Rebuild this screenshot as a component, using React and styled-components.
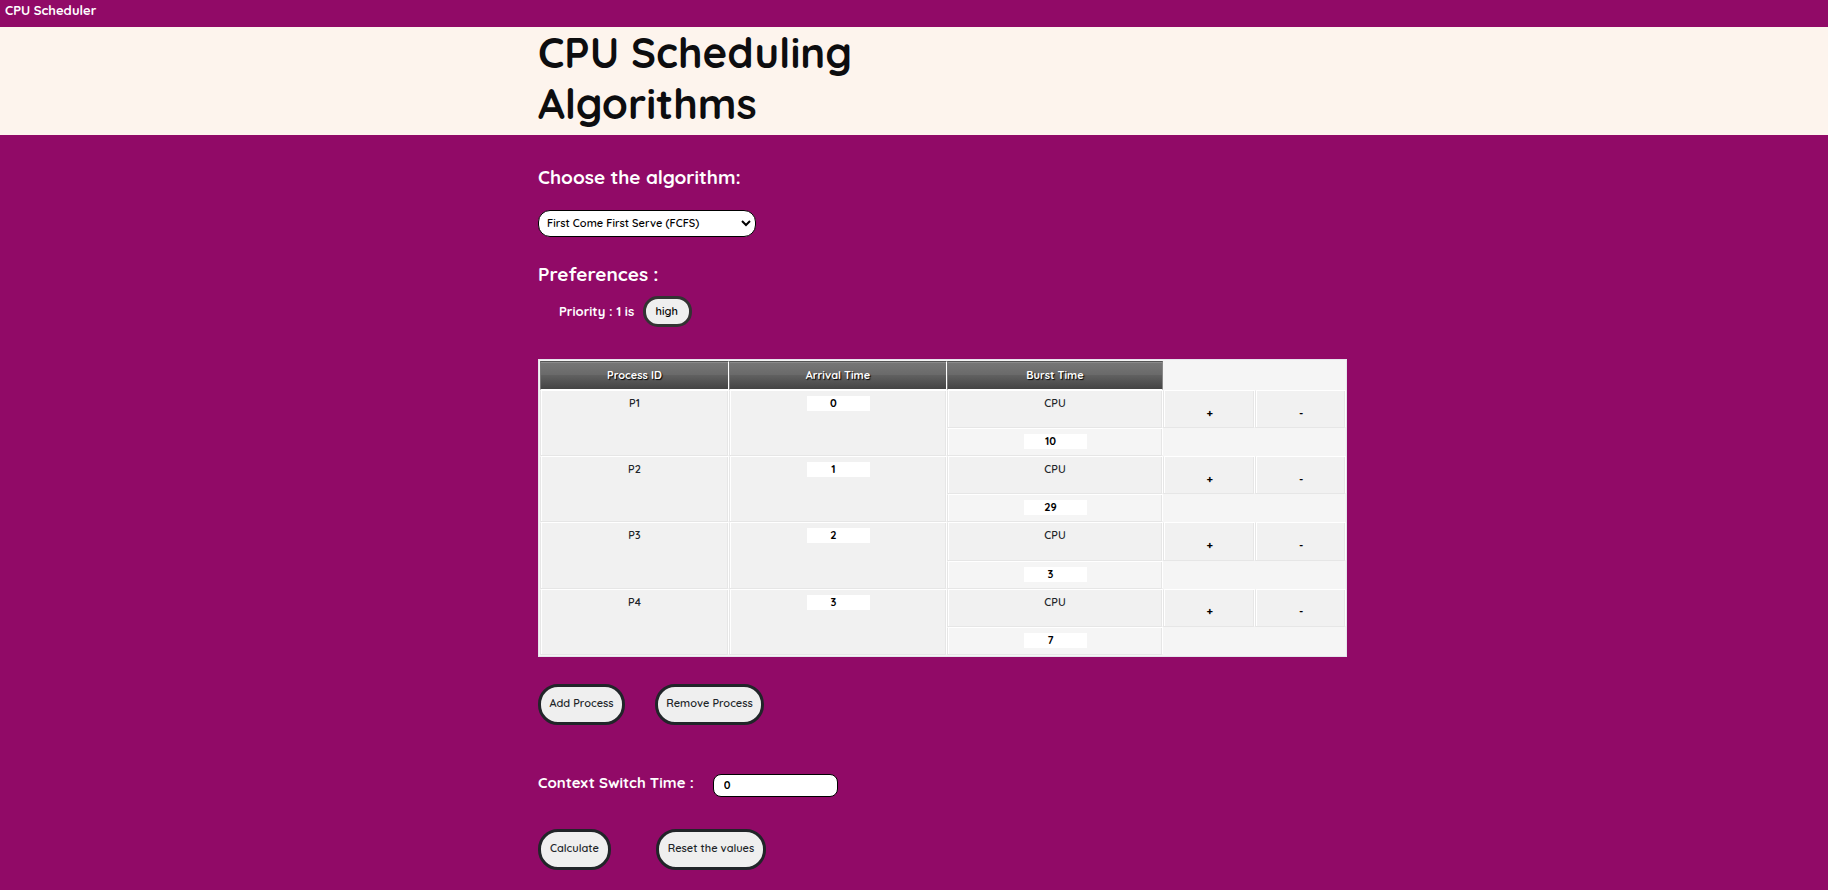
import React, { useState } from "react";
import styled, { createGlobalStyle, css } from "styled-components";

const GlobalStyle = createGlobalStyle`
  *, *::before, *::after { box-sizing: border-box; }
  body {
    margin: 0;
    min-height: 100vh;
    background: #910a67;
    color: #fff;
    font-family: Quicksand, Lato, "Liberation Sans", sans-serif;
    font-size: 11px;
    font-weight: 700;
  }
  button, input, select { font: inherit; }
`;

const NavBar = styled.nav`
  display: flex;
  height: 27px;
  padding: 1px 5px;
`;

const Brand = styled.a`
  color: #fff;
  font-size: 13px;
  line-height: 19px;
  text-decoration: none;
`;

const gutter = css`
  padding-left: calc(50% - 376px);
`;

const Header = styled.header`
  ${gutter}
  padding-bottom: 6px;
  background: #fdf4ed;
`;

const Title = styled.h1`
  max-width: 420px;
  margin: 0;
  color: #0d0d0f;
  font-size: 42px;
  font-weight: 700;
  line-height: 51px;
`;

const Main = styled.main`
  ${gutter}
  padding-top: 30px;
  display: flex;
  flex-direction: column;
  align-items: flex-start;
`;

const Heading = styled.label`
  font-size: 19px;
  line-height: 25px;
`;

const SectionTitle = styled.h2`
  margin: 25px 0 9px;
  font-size: 19px;
  font-weight: 700;
  line-height: 25px;
`;

const SelectWrap = styled.div`
  position: relative;
  margin-top: 20px;
  svg {
    position: absolute;
    right: 5px;
    top: 10px;
    pointer-events: none;
  }
`;

const Select = styled.select`
  appearance: none;
  display: block;
  width: 218px;
  height: 27px;
  padding: 0 24px 1px 8px;
  border: 1px solid #000;
  border-radius: 12px;
  background: #fff;
  color: #000;
  font-weight: 600;
`;

const Priority = styled.div`
  display: flex;
  align-items: center;
  gap: 9px;
  margin-left: 21px;
  font-size: 13px;
`;

const PriorityText = styled.span`
  padding-bottom: 2px;
`;

const PillButton = styled.button`
  height: ${(p) => (p.$small ? 31 : 41)}px;
  width: ${(p) => p.$width}px;
  padding: 0 ${(p) => (p.$small ? "2px 1px 0" : "0 3px")};
  border: 3px solid ${(p) => (p.$small ? "#333" : "#212529")};
  border-radius: ${(p) => (p.$small ? 15 : 20)}px;
  background: #efefef;
  color: ${(p) => (p.$small ? "#000" : "#212529")};
  font-size: 11px;
  font-weight: 600;
  white-space: nowrap;
`;

const Table = styled.table`
  width: 809px;
  height: 298px;
  margin-top: 32px;
  table-layout: fixed;
  border: 1px solid #e5e5ec;
  padding: 1px 0 1px 1px;
  border-spacing: 0;
  background: #f5f5f5;
  color: #212529;
  text-align: center;
`;

const HeadCell = styled.th`
  height: 29px;
  padding: 0 0 1px;
  border: 1px solid #fff;
  border-top-color: #555;
  border-left-color: #777;
  background: linear-gradient(#777, #696969 50%, #606060 50%, #444);
  background-clip: padding-box;
  box-shadow: inset 0 1px 0 #8b8b8b;
  color: #fff;
  text-shadow: 1px 1px 1px #000;
  &:last-child { border-right-color: #888; }
`;

const Cell = styled.td`
  height: ${(p) => (p.$sub ? 28 : 38)}px;
  padding: ${(p) => (p.$sub ? "4px" : "4px")} 0 0;
  border: 1px solid #fff;
  border-left-color: #e6e6e6;
  border-bottom-color: #e6e6e6;
  background: ${(p) => (p.$sub ? "#f5f5f5" : "#f1f1f1")};
  box-shadow: inset -1px 0 0 #e6e6e6, inset 1px 0 0 #fff;
  font-weight: 600;
  line-height: 17px;
  vertical-align: top;
`;

const TimeInput = styled.input`
  display: block;
  width: 63px;
  height: 15px;
  margin: 1px auto 0;
  padding: 0 9px 0 0;
  border: 0;
  background: #fff;
  color: #000;
  font-weight: 700;
  text-align: center;
`;

const StepButton = styled.button`
  width: 100%;
  height: 32px;
  padding: 4px 0 0 2px;
  border: 0;
  background: none;
  color: #000;
  font-weight: 700;
`;

const Actions = styled.div`
  display: flex;
  gap: ${(p) => p.$gap}px;
  margin-top: ${(p) => p.$top}px;
`;

const ContextRow = styled.div`
  display: flex;
  align-items: flex-start;
  gap: 19px;
  margin-top: 49px;
`;

const ContextLabel = styled.label`
  font-size: 15px;
  line-height: 18px;
`;

const ContextInput = styled.input`
  width: 125px;
  height: 23px;
  padding: 0 10px 2px;
  border: 1px solid #000;
  border-radius: 8px;
  background: #fff;
  color: #000;
  font-weight: 700;
`;

const initial = [
  { arrival: "0", burst: "10" },
  { arrival: "1", burst: "29" },
  { arrival: "2", burst: "3" },
  { arrival: "3", burst: "7" },
];

function ProcessRows({ index, process }) {
  const id = `P${index + 1}`;
  return (
    <>
      <tr>
        <Cell rowSpan={2}>{id}</Cell>
        <Cell rowSpan={2}>
          <TimeInput aria-label={`${id} arrival time`} defaultValue={process.arrival} />
        </Cell>
        <Cell>CPU</Cell>
        <Cell><StepButton type="button">+</StepButton></Cell>
        <Cell><StepButton type="button">-</StepButton></Cell>
      </tr>
      <tr>
        <Cell $sub>
          <TimeInput aria-label={`${id} burst time`} defaultValue={process.burst} />
        </Cell>
      </tr>
    </>
  );
}

export default function App() {
  const [processes, setProcesses] = useState(initial);
  const [high, setHigh] = useState(true);
  return (
    <>
      <GlobalStyle />
      <NavBar><Brand href="#">CPU Scheduler</Brand></NavBar>
      <Header><Title>CPU Scheduling Algorithms</Title></Header>
      <Main>
        <Heading htmlFor="algorithm">Choose the algorithm:</Heading>
        <SelectWrap>
          <Select id="algorithm">
            <option>First Come First Serve (FCFS)</option>
          </Select>
          <svg width="10" height="7" viewBox="0 0 10 7" fill="none" stroke="#000" strokeWidth="2">
            <path d="M1 1l4 4 4-4" />
          </svg>
        </SelectWrap>
        <SectionTitle>Preferences :</SectionTitle>
        <Priority>
          <PriorityText>Priority : 1 is</PriorityText>
          <PillButton type="button" $small $width={49} onClick={() => setHigh(!high)}>
            {high ? "high" : "low"}
          </PillButton>
        </Priority>
        <Table>
          <colgroup>
            <col width="189" />
            <col width="218" />
            <col width="216" />
            <col />
            <col />
          </colgroup>
          <thead>
            <tr>
              <HeadCell scope="col">Process ID</HeadCell>
              <HeadCell scope="col">Arrival Time</HeadCell>
              <HeadCell scope="col">Burst Time</HeadCell>
            </tr>
          </thead>
          <tbody>
            {processes.map((p, i) => <ProcessRows key={i} index={i} process={p} />)}
          </tbody>
        </Table>
        <Actions $top={27} $gap={30}>
          <PillButton type="button" $width={87} onClick={() => setProcesses([...processes, { arrival: "0", burst: "1" }])}>
            Add Process
          </PillButton>
          <PillButton type="button" $width={109} onClick={() => setProcesses(processes.slice(0, -1))}>
            Remove Process
          </PillButton>
        </Actions>
        <ContextRow>
          <ContextLabel htmlFor="context">Context Switch Time :</ContextLabel>
          <ContextInput id="context" defaultValue="0" />
        </ContextRow>
        <Actions $top={32} $gap={45}>
          <PillButton type="button" $width={73}>Calculate</PillButton>
          <PillButton type="button" $width={110}>Reset the values</PillButton>
        </Actions>
      </Main>
    </>
  );
}
